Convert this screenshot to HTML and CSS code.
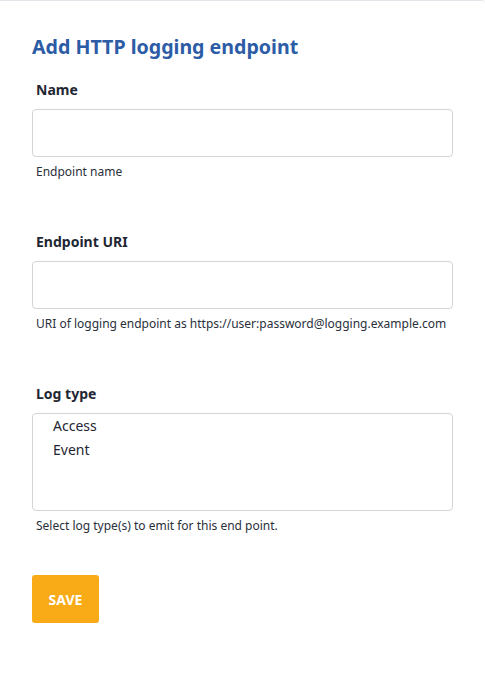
FILE: index.html
```html
<!DOCTYPE html>
<html lang="en">
  <head>
    <meta charset="UTF-8" />
    <meta name="viewport" content="width=device-width, initial-scale=1.0"/>
    <title>Add HTTP logging endpoint</title>
    <link rel="stylesheet" href="styles.css">
  </head>
  <body>
    <div class="card">
      <h1 class="title">Add HTTP logging endpoint</h1>

      <form class="form">
        <div class="field">
          <label class="label" for="name">Name</label>
          <input class="input" type="text" id="name" />
          <div class="help">Endpoint name</div>
        </div>

        <div class="field">
          <label class="label" for="uri">Endpoint URI</label>
          <input class="input" type="text" id="uri" />
          <div class="help">URI of logging endpoint as https://user:password@logging.example.com</div>
        </div>

        <div class="field">
          <label class="label" for="logtype">Log type</label>
          <select class="listbox" id="logtype" multiple>
            <option>Access</option>
            <option>Event</option>
          </select>
          <div class="help">Select log type(s) to emit for this end point.</div>
        </div>

        <button class="btn-save" type="button">Save</button>
      </form>
    </div>
  </body>
</html>
```

FILE: styles.css
```css
body {
  margin: 0;
  background-color: #ffffff;
  color: #1f2633;
  font-family: "Noto Sans", "Open Sans", sans-serif;
}
.card {
  border-top: 1px solid #e3e5ea;
  border-top-right-radius: 4px;
  height: 678px;
  box-sizing: border-box;
  padding: 32px 32px 0 32px;
}
.title {
  margin: 0 0 19px 0;
  font-size: 19.6px;
  line-height: 28px;
  font-weight: 700;
  color: #2d5ca6;
}
.form {
  display: flex;
  flex-direction: column;
}
.field {
  display: flex;
  flex-direction: column;
  margin-bottom: 51px;
}
.field:last-of-type {
  margin-bottom: 40px;
}
.label {
  padding-left: 4px;
  font-size: 14px;
  line-height: 20px;
  font-weight: 700;
  margin-bottom: 9px;
}
.input {
  height: 48px;
  box-sizing: border-box;
  border: 1px solid #d3d5d9;
  border-radius: 4px;
  padding: 0 12px;
  font-family: inherit;
  font-size: 14px;
  margin: 0;
}
.listbox {
  height: 98px;
  box-sizing: border-box;
  border: 1px solid #d3d5d9;
  border-radius: 4px;
  padding: 0;
  margin: 0;
  font-family: inherit;
  font-size: 14px;
  color: #1f2633;
  overflow: hidden;
  outline: none;
}
.listbox option {
  padding: 2px 20px 3px 20px;
}
.help {
  padding-left: 4px;
  margin-top: 6px;
  font-size: 12px;
  line-height: 18px;
  color: #2a303b;
}
.btn-save {
  align-self: flex-start;
  width: 67px;
  height: 48px;
  background-color: #f9ab17;
  border: none;
  border-radius: 3px;
  color: #ffffff;
  font-family: inherit;
  font-size: 14px;
  font-weight: 700;
  text-transform: uppercase;
  cursor: pointer;
}
```
